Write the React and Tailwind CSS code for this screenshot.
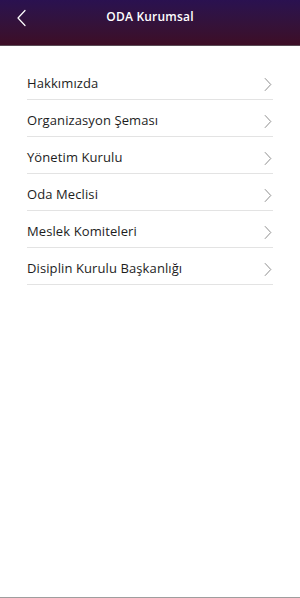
import React from 'react';

const items = [
  'Hakkımızda',
  'Organizasyon Şeması',
  'Yönetim Kurulu',
  'Oda Meclisi',
  'Meslek Komiteleri',
  'Disiplin Kurulu Başkanlığı',
];

const Chevron = ({ dir = 'right', className = '' }) => (
  <svg viewBox="0 0 10 18" className={className} fill="none" stroke="currentColor" strokeWidth="1.2" strokeLinecap="round" strokeLinejoin="round">
    {dir === 'right' ? <path d="M1.5 1.5 L8.5 9 L1.5 16.5" /> : <path d="M8.5 1.5 L1.5 9 L8.5 16.5" />}
  </svg>
);

export default function App() {
  return (
    <div className="w-[300px] h-[598px] bg-white flex flex-col font-['Open_Sans',sans-serif] border-b border-[#9e9e9e]">
      <div className="h-[46px] shrink-0 bg-gradient-to-b from-[#2a1150] to-[#3d0d26] border-b border-[#5a4a55] flex items-center relative">
        <button className="absolute left-[16px] top-[9px] text-white">
          <Chevron dir="left" className="w-[11px] h-[18px]" />
        </button>
        <div className="flex-1 text-center text-white text-[12px] font-semibold tracking-[0.2px] -mt-[11px]">ODA Kurumsal</div>
      </div>
      <div className="px-[27px] pt-[17px] flex flex-col">
        {items.map((t) => (
          <div key={t} className="h-[37px] pt-[6px] flex items-center justify-between border-b border-[#e3e3e3]">
            <span className="text-[13px] text-[#1d1d1d] tracking-[0.1px]">{t}</span>
            <Chevron className="w-[8px] h-[15px] text-[#8a8a8a] mr-[1px]" />
          </div>
        ))}
      </div>
    </div>
  );
}
